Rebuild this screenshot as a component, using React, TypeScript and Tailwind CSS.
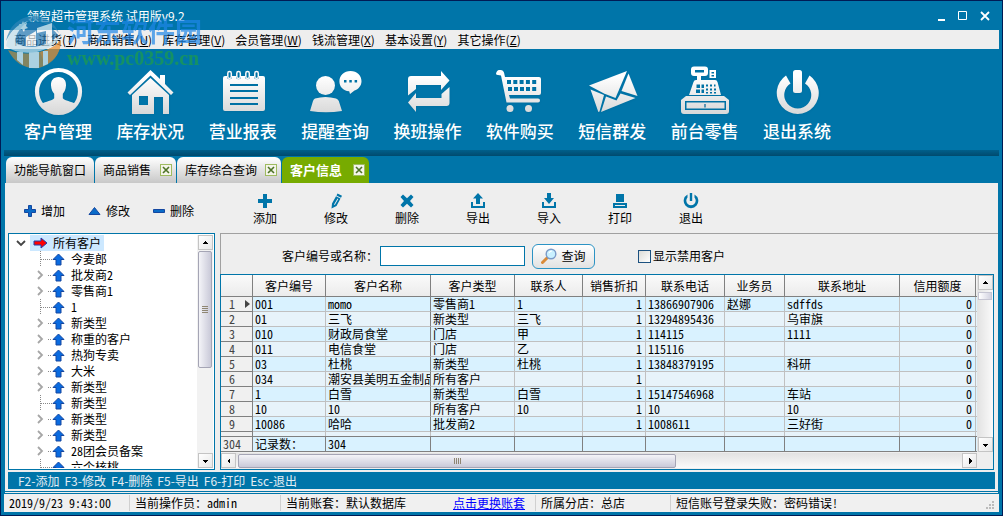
import { useState, type ReactNode } from "react"

const mono = "font-['Noto_Sans_Mono_CJK_SC','Noto_Sans_CJK_SC',monospace]"

const menus = [
  ['商品进货', 'T'],
  ['商品销售', 'U'],
  ['库存管理', 'V'],
  ['会员管理', 'W'],
  ['钱流管理', 'X'],
  ['基本设置', 'Y'],
  ['其它操作', 'Z'],
]

const bigIcons: { label: string; art: ReactNode }[] = [
  {
    label: '客户管理',
    art: (
      <>
        <circle cx="25.500" cy="25.500" r="21.500" fill="none" stroke="url(#steel)" strokeWidth="4.200" />
        <path d="M25.500 11c5 0 7.800 3.500 7.500 8.500-.3 4-1.500 6.500-3.200 8.300v4.500c2.500 2.800 8 3 13 5.500A21 21 0 0 1 25.500 47 21 21 0 0 1 8.200 37.800c5-2.500 10.500-2.700 13-5.500v-4.500C19.500 26 18.300 23.500 18 19.500c-.3-5 2.500-8.500 7.500-8.500z" />
      </>
    ),
  },
  {
    label: '库存状况',
    art: (
      <>
        <path d="M25.500 4 35 13V9h5v9l8.500 8.500-2.500 2.500L25.500 9.500 5 29l-2.500-2.500z" />
        <path fillRule="evenodd" d="M25.500 12 44 29v19H38V31H29v17H7V29zM14 30v9h9v-9z" />
      </>
    ),
  },
  {
    label: '营业报表',
    art: (
      <>
        <path fillRule="evenodd" d="M7 10h2v2a3 3 0 0 0 5 0v-2h4v2a3 3 0 0 0 5 0v-2h4v2a3 3 0 0 0 5 0v-2h4v2a3 3 0 0 0 5 0v-2h4a2 2 0 0 1 2 2v31a2 2 0 0 1-2 2H7a2 2 0 0 1-2-2V12a2 2 0 0 1 2-2zm5 8v2h28v-2zm0 6v2h28v-2zm0 7v2h28v-2zm0 6v2h28v-2z" />
        <g fill="none" stroke="#f8f8f8" strokeWidth="1.500">
          <rect x="9.800" y="5.500" width="3.500" height="7" rx="1.700" />
          <rect x="18.800" y="5.500" width="3.500" height="7" rx="1.700" />
          <rect x="27.800" y="5.500" width="3.500" height="7" rx="1.700" />
          <rect x="36.800" y="5.500" width="3.500" height="7" rx="1.700" />
        </g>
      </>
    ),
  },
  {
    label: '提醒查询',
    art: (
      <>
        <circle cx="15.500" cy="19.500" r="9.500" />
        <path d="M5 32.500q10.500-3 21 0 2 .5 2.800 2.500L32 45q-16 2.600-32 0l3-10q.6-2 2-2.500z" />
        <path fillRule="evenodd" d="M40.500 5c6.600 0 11 4.600 11 10.200 0 4.400-3 8-7 9.300l-4.500 3.500-.8-2.800C33 24.800 29.400 20.500 29.400 15.200 29.400 9.600 34 5 40.500 5zM34 14v2.500h2.500V14zm5.300 0v2.500h2.500V14zm5.300 0v2.500h2.500V14z" />
      </>
    ),
  },
  {
    label: '换班操作',
    art: (
      <>
        <path d="M5 29.500V13q0-3 3-3h30V5l8.500 9.500L38 24v-5H13v4z" />
        <path d="M46.500 21v16q0 3-3 3H13v6L5 36.500 13 27v5h25.500v-4z" />
      </>
    ),
  },
  {
    label: '软件购买',
    art: (
      <>
        <path fillRule="evenodd" d="M4 4h2q2.300 0 3 2.500L10 11h34q2 0 2 2v14q0 2-2 2H14l1 3.500h28q2 0 2 2t-2 2H11.500L6 9.500 3 9q-2 0-2-1.500Q2 4 4 4zM12 14v4h4v-4zm6.300 0v4h4v-4zm6.300 0v4h4v-4zm6.300 0v4h4v-4zm6.300 0v4h4v-4zM13 21v4h4v-4zm6 0v4h4v-4zm6 0v4h4v-4zm6 0v4h4v-4zm6.200 0v4h4v-4z" />
        <circle cx="15" cy="42.500" r="3.500" />
        <circle cx="33.500" cy="42.500" r="3.500" />
      </>
    ),
  },
  {
    label: '短信群发',
    art: (
      <>
        <path d="M2 19.500 40 5 28.500 32 17 27.500z" />
        <path d="M3.500 23.500 17 29 12.500 45.500Q11.500 46.500 11 45z" />
        <path d="M41.500 7.500 50.500 30 34.500 25z" />
        <path d="M19 30.500 29.500 34.500 33.500 27.500 48.500 32 14 46z" />
      </>
    ),
  },
  {
    label: '前台零售',
    art: (
      <>
        <path fillRule="evenodd" d="M14 .5h11q3 0 3 3V7q0 3-3 3h-4v4h14q2 0 2.500 2L41 29H9l4.500-13q.5-2 2.500-2h1v-4h-3q-3 0-3-3V3.500q0-3 3-3zM15 4v2.500h9V4zm1.500 14.500V22H20v-3.500zm5 0V22H24v-3.500zm4.500 0v2h2v-2zm4 0v2h2v-2zm4 0v2h1.500v-2zM16 23.500V27h4v-3.500zm5.500 0V27H24v-3.500zm4.500-1v2h2v-2zm4 0v2h2v-2zm4 0v2h2v-2zm-8 3.500v1.500h2V26zm4 0v1.500h2V26zm4 0v1.500h2V26z" />
        <path fillRule="evenodd" d="M29.500 4H36v8h-6.500zM31.500 6v1.500H34V6zm0 3v1.500H34V9z" />
        <path fillRule="evenodd" d="M6 30h38l5 4v11q0 3-3 3H4q-3 0-3-3V34zM5 35v9h41v-9zm1.500 1.500h38v6h-38z" />
        <path d="M25 38v3.500" stroke="#2a7ba3" strokeWidth="1.500" />
      </>
    ),
  },
  {
    label: '退出系统',
    art: (
      <>
        <rect x="21" y="4" width="9" height="23" rx="2.500" />
        <path d="M14 9.500 18.500 17.500A13.500 13.500 0 1 0 33 17.500L37.500 9.500A21 21 0 1 1 14 9.500z" />
      </>
    ),
  },
]

const tabs = [
  { name: '功能导航窗口', closable: false, width: 'w-[88px]' },
  { name: '商品销售', closable: true, width: 'w-[81px]' },
  { name: '库存综合查询', closable: true, width: 'w-[104px]' },
  { name: '客户信息', closable: true, width: 'w-[87px]' },
]

const tools: { label: string; art: ReactNode }[] = [
  { label: '添加', art: <path d="M6 1h4v5h5v4h-5v5H6v-5H1V6h5z" /> },
  {
    label: '修改',
    art: <path d="M9.500.5 14 2.800l-1 2-4.500-2.300zM8 3.300l4.500 2.300-4 7.400L3.500 15.500 4 10.500zM9.500 5.500l-3.500 6 .8.500 3.500-6z" fillRule="evenodd" />,
  },
  { label: '删除', art: <path d="M4 1.500 8 5.200 12 1.500 14.500 4 11 8l3.500 4-2.500 2.500-4-3.700-4 3.700L1.500 12 5 8 1.500 4z" /> },
  { label: '导出', art: <path d="M8 0l5 5.500h-3V11H6V5.500H3zM1 9h2v4h10V9h2v6H1z" /> },
  { label: '导入', art: <path d="M6 0h4v5h3l-5 6-5-6h3zM1 9h2v4h10V9h2v6H1z" /> },
  { label: '打印', art: <path fillRule="evenodd" d="M4 1h8v8H4zM1 10h14v5H1zM3 12v1h10v-1z" /> },
  {
    label: '退出',
    art: <path d="M6.800 0h2.400v8H6.800zM4.500 1.500v3a4.700 4.700 0 1 0 7 0v-3A7.300 7.300 0 1 1 4.500 1.500z" />,
  },
]

const tree = [
  ['今麦郎', false],
  ['批发商2', true],
  ['零售商1', true],
  ['1', false],
  ['新类型', true],
  ['称重的客户', true],
  ['热狗专卖', true],
  ['大米', true],
  ['新类型', true],
  ['新类型', false],
  ['新类型', true],
  ['新类型', true],
  ['28团会员备案', true],
  ['六个核桃', false],
] as [string, boolean][]

const columns = [
  { title: '客户编号', width: 'w-[73px]' },
  { title: '客户名称', width: 'w-[105px]' },
  { title: '客户类型', width: 'w-[84px]' },
  { title: '联系人', width: 'w-[68px]' },
  { title: '销售折扣', width: 'w-[63px]' },
  { title: '联系电话', width: 'w-[79px]' },
  { title: '业务员', width: 'w-[60px]' },
  { title: '联系地址', width: 'w-[115px]' },
  { title: '信用额度', width: 'w-[76px]' },
]

const rows = [
  ['001', 'momo', '零售商1', '1', '1', '13866907906', '赵娜', 'sdffds', '0'],
  ['01', '三飞', '新类型', '三飞', '1', '13294895436', '', '乌审旗', '0'],
  ['010', '财政局食堂', '门店', '甲', '1', '114115', '', '1111', '0'],
  ['011', '电信食堂', '门店', '乙', '1', '115116', '', '', '0'],
  ['03', '杜桃', '新类型', '杜桃', '1', '13848379195', '', '科研', '0'],
  ['034', '潮安县美明五金制品厂', '所有客户', '', '1', '', '', '', '0'],
  ['1', '白雪', '新类型', '白雪', '1', '15147546968', '', '车站', '0'],
  ['10', '10', '所有客户', '10', '1', '10', '', '10', '0'],
  ['10086', '哈哈', '批发商2', '', '1', '1008611', '', '三好街', '0'],
]

function Triangle({ dir }: { dir: 'up' | 'down' | 'left' | 'right' }) {
  const d = {
    up: 'M4 2 7 5H1z',
    down: 'M4 6 7 3H1z',
    left: 'M2 4 5 1v6z',
    right: 'M6 4 3 1v6z',
  }
  return (
    <svg className="w-2 h-2" viewBox="0 0 8 8" shapeRendering="crispEdges">
      <path d={d[dir]} />
    </svg>
  )
}

function ScrollButton({ dir }: { dir: 'up' | 'down' | 'left' | 'right' }) {
  return (
    <button
      aria-label={dir}
      className="w-[15px] h-[15px] shrink-0 flex items-center justify-center bg-linear-to-br from-white to-[#e8e8e8] border border-[#c4c4c4]"
    >
      <Triangle dir={dir} />
    </button>
  )
}

function CloseBox({ name }: { name: string }) {
  return (
    <button aria-label={'关闭' + name} className="w-3 h-3 bg-[#f4f4ea] border border-[#9fbb60] flex items-center justify-center">
      <svg className="w-2 h-2" viewBox="0 0 8 8" stroke="#4d7326" strokeWidth="1.600">
        <path d="M1 1l6 6M7 1L1 7" />
      </svg>
    </button>
  )
}

function Watermark() {
  return (
    <div className="absolute left-1 top-[14px] flex pointer-events-none opacity-70" aria-hidden="true">
      <svg className="w-[58px] h-[54px]" viewBox="0 0 58 54">
        <path d="M1 26Q6 3 28 1q18 0 26 17-8-10-26-12Q10 8 1 26z" fill="#2f86b8" />
        <path d="M3 26Q9 10 27 7q16 0 26 13-6 9-22 12-16 3-28-6z" fill="#2478b4" />
        <path d="M3 35q13 5 27 3 18-3 26-13-1 22-22 28Q13 55 3 35z" fill="#b98c45" />
        <path d="M35 37q13-3 21-12 0 17-16 25z" fill="#ef8f2c" />
        <path d="M12 37h6v13l-6-5zM24 37h10v16H24zM21 22l10-6v15H21zM32 13l15-5v21l-6 3V16l-9 2zM38 36h5v13l-5 2zM18 6l1 3 3-1-1 3 2 2-3 1-1 3-2-3-3 1 2-3-2-3h3z" fill="#f4f8fa" />
        <path d="M1 31Q4 12 23 6 8 19 11 28q11 6 25 3 14-4 21-13-5 14-25 19-20 3-31-6z" fill="#c6e2ee" />
      </svg>
      <div className="pl-1">
        <p className="text-[27px] leading-[32px] text-[#1f87e8] font-bold">河东软件园</p>
        <p className="text-[20px] leading-[22px] font-bold text-[#1f9e48] font-['Liberation_Serif',serif]">www.pc0359.cn</p>
      </div>
    </div>
  )
}

function TitleBar() {
  return (
    <header className="h-[29px] flex items-center justify-between pl-[23px] pr-2 text-white">
      <h1 className="text-xs">领智超市管理系统 试用版v9.2</h1>
      <div className="flex gap-[10px]">
        <button aria-label="最小化" className="w-3 h-3">
          <svg viewBox="0 0 12 12" fill="#fff"><path d="M3 9h7v2H3z" /></svg>
        </button>
        <button aria-label="最大化" className="w-3 h-3">
          <svg viewBox="0 0 12 12" fill="none" stroke="#fff"><path d="M1.500 1.500h8v8h-8z" /></svg>
        </button>
        <button aria-label="关闭" className="w-3 h-3">
          <svg viewBox="0 0 12 12" fill="none" stroke="#fff" strokeWidth="1.800"><path d="M2 2l8 8M10 2l-8 8" /></svg>
        </button>
      </div>
    </header>
  )
}

function TreePanel() {
  return (
    <aside className="w-[207px] h-[237px] shrink-0 border border-[#0075a9] bg-white flex p-px">
      <ul className={`flex-1 overflow-hidden text-xs leading-4 ${mono}`}>
        <li className="flex items-center h-4">
          <svg className="w-[10px] h-[10px] ml-[6px]" viewBox="0 0 10 10" fill="none" stroke="#444" strokeWidth="1.800">
            <path d="M1 3l4 4 4-4" />
          </svg>
          <span className="ml-1 h-4 flex items-center bg-[#cce8ff] pl-[3px] pr-[3px]">
            <svg className="w-[15px] h-3" viewBox="0 0 15 12" fill="#f00" stroke="#1d3fae">
              <path d="M1 4h7V1l6 5-6 5V8H1z" />
            </svg>
            <span className="ml-[5px]">所有客户</span>
          </span>
        </li>
        {tree.map(([name, more], i) => (
          <li key={i} className="flex items-center h-4 pl-[26px] whitespace-nowrap">
            <svg className="w-4 h-4 shrink-0" viewBox="0 0 16 16" fill="none">
              {more ? (
                <>
                  <path d="M2 4l4 4-4 4" stroke="#a6a6a6" strokeWidth="1.800" />
                  <path d="M12 8.500h4" stroke="#888" strokeDasharray="1 1" />
                </>
              ) : (
                <path d="M4.500 0v16M5 8.500h11" stroke="#888" strokeDasharray="1 1" />
              )}
            </svg>
            <svg className="w-[13px] h-[13px] shrink-0" viewBox="0 0 13 13" fill="#0a6be0" stroke="#1447a0">
              <path d="M6.500 1l5.500 5.500H9V12H4V6.500H1z" />
            </svg>
            <span className="ml-[6px]">{name}</span>
          </li>
        ))}
      </ul>
      <div className="w-4 shrink-0 flex flex-col items-center bg-[#f2f2f2]">
        <ScrollButton dir="up" />
        <div className="w-[14px] h-[117px] mt-px border border-[#a5a5b5] rounded-xs bg-linear-to-r from-[#f4f4f8] to-[#c9c9d8] flex flex-col items-center justify-center gap-px">
          <i className="w-[6px] h-px bg-[#8f8672]" />
          <i className="w-[6px] h-px bg-[#8f8672]" />
          <i className="w-[6px] h-px bg-[#8f8672]" />
          <i className="w-[6px] h-px bg-[#8f8672]" />
        </div>
        <div className="flex-1" />
        <ScrollButton dir="down" />
      </div>
    </aside>
  )
}

function CustomerTable() {
  return (
    <table className={`flex-1 w-0 table-fixed border-separate border-spacing-0 text-xs leading-[14px] ${mono}`}>
      <thead>
        <tr className="h-[22px] bg-linear-to-b from-[#fafafa] to-[#ebebeb]">
          <th className="w-8 border-r border-b border-[#808080]" />
          {columns.map((c) => (
            <th key={c.title} className={`${c.width} font-normal border-r border-b border-[#808080]`}>
              {c.title}
            </th>
          ))}
          <th className="border-b border-[#808080]" />
        </tr>
      </thead>
      <tbody>
        {rows.map((row, i) => (
          <tr key={i} className="h-[15px] odd:bg-[#d9f2ff] even:bg-[#e7f3fa]">
            <th scope="row" className="font-normal text-left border-r border-b border-[#808080] bg-[#f0f0f0] text-[#444]">
              <div className="flex items-center pl-2">
                <span className="w-4">{i + 1}</span>
                {i === 0 && <svg className="w-[5px] h-2" viewBox="0 0 5 8" fill="#444"><path d="M0 0l5 4-5 4z" /></svg>}
              </div>
            </th>
            {row.map((cell, j) => (
              <td
                key={j}
                className={`border-r border-b border-b-[#c0c0c0] whitespace-nowrap ${
                  j === 1 ? 'border-r-[#808080] overflow-x-clip' : 'border-r-[#c0c0c0]'
                } ${j === 4 || j === 8 ? 'text-right pr-[3px]' : 'pl-[2px]'}`}
              >
                {cell}
              </td>
            ))}
            <td className="border-b border-[#c0c0c0]" />
          </tr>
        ))}
        <tr className="h-1 bg-[#e7f3fa]">
          <td className="border-r border-[#808080] bg-[#f0f0f0]" />
          {columns.map((c) => (
            <td key={c.title} className="border-r border-[#c0c0c0]" />
          ))}
          <td />
        </tr>
      </tbody>
      <tfoot>
        <tr className="h-4 bg-[#d9f2ff]">
          <th scope="row" className="font-normal text-left pl-[2px] text-[#444] bg-[#f0f0f0] border-y border-r border-[#808080]">304</th>
          {columns.map((c, j) => (
            <td key={c.title} className="border-y border-r border-[#808080] pl-[2px]">
              {j === 0 ? '记录数：' : j === 1 ? '304' : ''}
            </td>
          ))}
          <td className="border-y border-[#808080]" />
        </tr>
      </tfoot>
    </table>
  )
}

function CustomerPanel() {
  const [keyword, setKeyword] = useState('')
  const [showDisabled, setShowDisabled] = useState(false)

  return (
    <section className="flex-1 min-w-0">
      <div className={`h-[41px] border-t border-l border-[#a0a0a0] flex items-center pt-1 pl-[61px] text-xs ${mono}`}>
        <label htmlFor="keyword" className="w-[98px] whitespace-nowrap">客户编号或名称：</label>
        <input
          id="keyword"
          value={keyword}
          onChange={(e) => setKeyword(e.target.value)}
          className="w-[145px] h-5 px-1 bg-white border border-[#0075a9] outline-none"
        />
        <button className="ml-[7px] w-[63px] h-[25px] flex items-center justify-center gap-1 rounded-md border border-[#2c93c4] bg-linear-to-b from-white to-[#e2e2e2]">
          <svg className="w-4 h-4" viewBox="0 0 16 16">
            <path d="M1.500 14.500 6.500 9.500" stroke="#d98b3a" strokeWidth="3" strokeLinecap="round" />
            <circle cx="10" cy="6" r="4.800" fill="#c9f0ff" stroke="#7a9ac8" strokeWidth="1.400" />
            <path d="M8 5q1-2 3-2" fill="none" stroke="#fff" strokeWidth="1.200" />
          </svg>
          查询
        </button>
        <label className="ml-[43px] flex items-center gap-[2px]">
          <input
            type="checkbox"
            checked={showDisabled}
            onChange={(e) => setShowDisabled(e.target.checked)}
            className="appearance-none w-[13px] h-[13px] border border-[#1c5180] bg-linear-to-br from-[#dcdcd7] to-white checked:bg-[#0075a9]"
          />
          显示禁用客户
        </label>
      </div>
      <div className="mr-1 border border-[#0075a9] bg-[#eee]">
        <div className="flex">
          <CustomerTable />
          <div className="w-4 flex flex-col items-center bg-linear-to-r from-[#e2e2e2] to-[#fafafa]">
            <ScrollButton dir="up" />
            <div className="w-[14px] h-2 mt-[2px] border border-[#c5c5d2] bg-linear-to-r from-white to-[#d2d2e0]" />
            <div className="flex-1" />
            <ScrollButton dir="down" />
          </div>
        </div>
        <div className="flex items-center h-[17px]">
          <div className="flex-1 flex items-center bg-linear-to-b from-[#e2e2e2] to-[#fafafa]">
            <ScrollButton dir="left" />
            <div className="w-[58%] ml-[2px] mr-auto h-[14px] border border-[#a5a5b5] rounded-xs bg-linear-to-b from-[#f4f4f8] to-[#c9c9d8] flex items-center justify-center gap-px">
              <i className="w-px h-[6px] bg-[#8f8672]" />
              <i className="w-px h-[6px] bg-[#8f8672]" />
              <i className="w-px h-[6px] bg-[#8f8672]" />
              <i className="w-px h-[6px] bg-[#8f8672]" />
            </div>
            <ScrollButton dir="right" />
          </div>
          <div className="w-4" />
        </div>
      </div>
    </section>
  )
}

function App() {
  return (
    <div className="relative bg-[#0075a9] border border-[#001b55] px-[3px] pb-[3px] text-black font-['Noto_Sans_CJK_SC',sans-serif]">
      <TitleBar />

      <nav className="h-[19px] bg-[#eee] flex items-center gap-[10px] pl-[10px] text-xs">
        {menus.map(([name, key]) => (
          <button key={key} className="whitespace-nowrap">
            {name}(<u>{key}</u>)
          </button>
        ))}
      </nav>

      <div className="h-[101px] pl-5 pt-[17px]">
        <svg className="w-0 h-0 absolute">
          <defs>
            <linearGradient id="steel" gradientUnits="userSpaceOnUse" x1="0" y1="0" x2="0" y2="50">
              <stop offset="0.2" stopColor="#fff" />
              <stop offset="1" stopColor="#d6d6d6" />
            </linearGradient>
          </defs>
        </svg>
        <div className="max-w-[807px] flex justify-between">
          {bigIcons.map((item) => (
            <button key={item.label} className="w-[68px] flex flex-col items-center text-white">
              <svg className="w-[50px] h-[50px] overflow-visible drop-shadow-xs" viewBox="0 0 50 50" fill="url(#steel)">
                {item.art}
              </svg>
              <span className="mt-[3px] text-[17px] leading-6 font-medium whitespace-nowrap">{item.label}</span>
            </button>
          ))}
        </div>
      </div>

      <div className="h-[6px] bg-linear-to-b from-[#005f8b] to-[#004a6e]" />

      <div className="flex gap-px pt-px pl-[2px]">
        {tabs.map((tab) => {
          const active = tab.name === '客户信息'
          return (
            <div
              key={tab.name}
              className={`${tab.width} h-[26px] flex items-center justify-between pl-2 pr-1 rounded-t-md ${
                active ? 'bg-[#77ab00]' : 'bg-linear-to-b from-white to-[#c8c8c8]'
              }`}
            >
              <button
                className={`whitespace-nowrap ${active ? 'text-[13px] font-bold text-white' : 'text-xs'}`}
              >
                {tab.name}
              </button>
              {tab.closable && <CloseBox name={tab.name} />}
            </div>
          )
        })}
      </div>

      <main className="mx-px bg-[#eee] pl-[3px] pb-[2px]">
        <div className={`h-[50px] flex text-xs ${mono}`}>
          <div className="w-[232px] shrink-0 flex items-center gap-[23px] pt-[6px] pl-4">
            <button className="flex items-center gap-[5px]">
              <svg className="w-3 h-3" viewBox="0 0 12 12" fill="#0a6bc8" stroke="#1447a0"><path d="M4.500.5h3v4h4v3h-4v4h-3v-4h-4v-3h4z" /></svg>
              增加
            </button>
            <button className="flex items-center gap-[5px]">
              <svg className="w-[13px] h-3" viewBox="0 0 13 12" fill="#0a6bc8" stroke="#1447a0"><path d="M6.500 2.500 12 9.500H1z" /></svg>
              修改
            </button>
            <button className="flex items-center gap-[5px]">
              <svg className="w-3 h-3" viewBox="0 0 12 12" fill="#0a6bc8" stroke="#1447a0"><path d="M.5 4.500h11v3H.5z" /></svg>
              删除
            </button>
          </div>
          <div className="flex gap-[35px] pt-[10px] pl-[7px]">
            {tools.map((t) => (
              <button key={t.label} className="w-9 flex flex-col items-center">
                <svg className="w-4 h-4" viewBox="0 0 16 16" fill="#0075a9">{t.art}</svg>
                <span className="leading-4 mt-px">{t.label}</span>
              </button>
            ))}
          </div>
        </div>

        <div className="flex gap-[5px]">
          <TreePanel />
          <CustomerPanel />
        </div>

        <div className="h-[17px] mt-[2px] mr-[3px] bg-[#0075a9] text-[#e4eef4] text-xs leading-[17px] pl-[10px] flex gap-[5px]">
          {['F2-添加', 'F3-修改', 'F4-删除', 'F5-导出', 'F6-打印', 'Esc-退出'].map((k) => (
            <span key={k}>{k}</span>
          ))}
        </div>
      </main>

      <div className="mx-px mt-px h-px bg-[#eee]" />

      <footer className={`mt-px h-[18px] bg-[#f0f0f0] flex items-center text-xs whitespace-nowrap ${mono}`}>
        <span className="w-[125px] pl-[5px]">2019/9/23 9:43:00</span>
        <span className="w-[151px] pl-[5px] border-l border-[#d0d0d0]">当前操作员：admin</span>
        <span className="w-[168px] pl-[5px] border-l border-[#d0d0d0]">当前账套：默认数据库</span>
        <a href="#" className="w-[87px] pl-[5px] text-[#00f] underline">点击更换账套</a>
        <span className="w-[135px] pl-[5px] border-l border-[#d0d0d0]">所属分店：总店</span>
        <span className="flex-1 pl-[5px] border-l border-[#d0d0d0]">短信账号登录失败：密码错误!</span>
        <svg className="w-3 h-3 mr-1 mt-[6px]" viewBox="0 0 12 12" fill="#bbb">
          <path d="M9 1h2v2H9zM6 4h2v2H6zM9 4h2v2H9zM3 7h2v2H3zM6 7h2v2H6zM9 7h2v2H9z" />
        </svg>
      </footer>

      <Watermark />
    </div>
  )
}

export default App
